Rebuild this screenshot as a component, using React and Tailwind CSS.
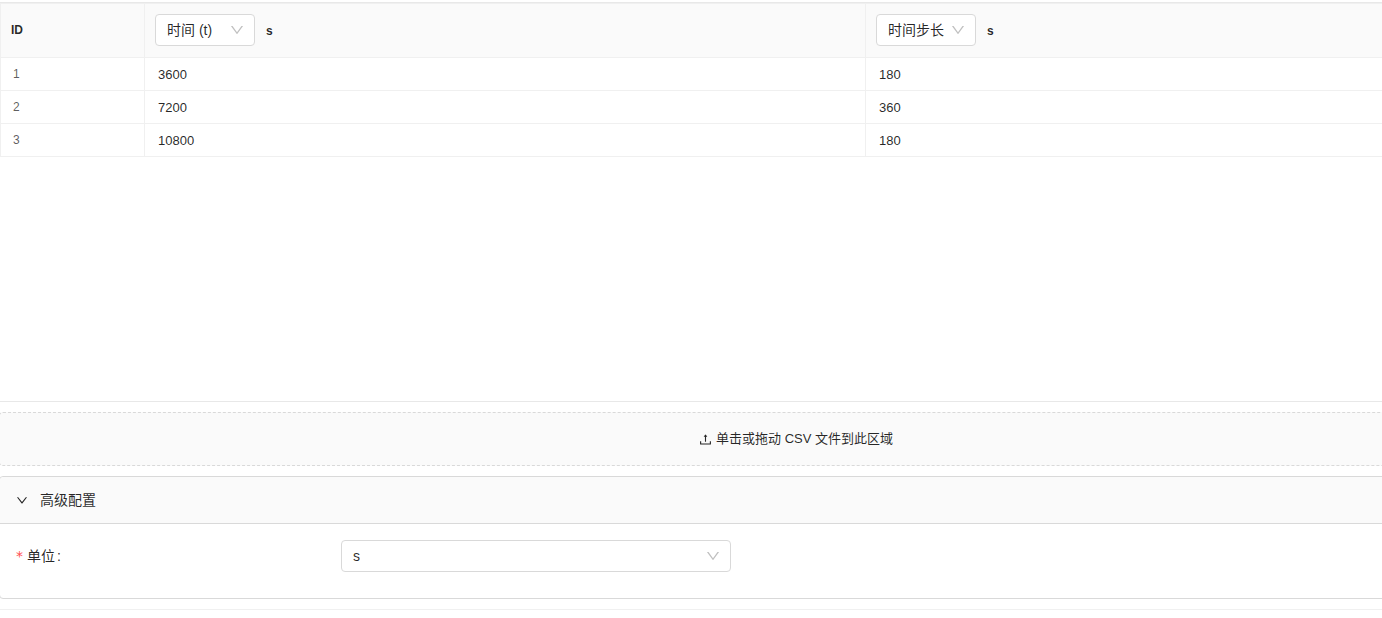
import React, { useState } from "react";

const rows = [
  { id: 1, time: 3600, step: 180 },
  { id: 2, time: 7200, step: 360 },
  { id: 3, time: 10800, step: 180 },
];

function Icon({ d, className }) {
  return (
    <svg viewBox="64 64 896 896" fill="currentColor" aria-hidden="true" className={`shrink-0 ${className}`}>
      <path d={d} />
    </svg>
  );
}

const DOWN =
  "M884 256h-75c-5.1 0-9.9 2.5-12.9 6.6L512 654.2 227.9 262.6c-3-4.1-7.8-6.6-12.9-6.6h-75c-6.5 0-10.3 7.4-6.5 12.7l352.6 486.1c12.8 17.6 39 17.6 51.7 0l352.6-486.1c3.9-5.3.1-12.7-6.4-12.7z";
const RIGHT =
  "M765.7 486.8L314.9 134.7A7.97 7.97 0 00302 141v77.3c0 4.9 2.3 9.6 6.1 12.6l360 281.1-360 281.1c-3.9 3-6.1 7.7-6.1 12.6V883c0 6.7 7.7 10.4 12.9 6.3l450.8-352.1a31.96 31.96 0 000-50.4z";
const UPLOAD =
  "M400 317.7h73.9V656c0 4.4 3.6 8 8 8h60c4.4 0 8-3.6 8-8V317.7H624c6.7 0 10.4-7.7 6.3-12.9L518.3 163a8 8 0 00-12.6 0l-112 141.7c-4.1 5.3-.4 13 6.3 13zM878 626h-60c-4.4 0-8 3.6-8 8v154H214V634c0-4.4-3.6-8-8-8h-60c-4.4 0-8 3.6-8 8v198c0 17.7 14.3 32 32 32h684c17.7 0 32-14.3 32-32V634c0-4.4-3.6-8-8-8z";

function Select({ id, label, options, className }) {
  return (
    <div className={`relative ${className}`}>
      <select
        id={id}
        aria-label={label}
        className="block h-8 w-full appearance-none rounded border border-[#d9d9d9] bg-white pr-6 pl-[11px] text-sm font-normal text-black/85 outline-none focus:border-blue-400"
      >
        {options.map((o) => (
          <option key={o}>{o}</option>
        ))}
      </select>
      <Icon d={DOWN} className="pointer-events-none absolute top-[9px] right-[11px] size-[14px] text-black/25" />
    </div>
  );
}

function HeaderCell({ label, unit }) {
  return (
    <th scope="col" className="border-r border-b border-[#f0f0f0] px-[10px] pb-[2px] font-normal">
      <div className="flex items-center gap-[11px]">
        <Select label="列类型" options={[label]} className="w-[100px]" />
        <span className="pt-[2px] text-xs font-bold">{unit}</span>
      </div>
    </th>
  );
}

export default function App() {
  const [open, setOpen] = useState(true);
  return (
    <div className="overflow-hidden bg-white pt-[2px] font-['Liberation_Sans','Noto_Sans_CJK_SC',sans-serif] text-sm text-black/85">
      <main className="w-[calc(100%+210px)] border-b border-[#f0f0f0] pb-[10px]">
        <section className="min-h-[400px] border-y border-[#e8e8e8]">
          <table className="w-full table-fixed border-separate border-spacing-0 border-t border-l border-[#f0f0f0] text-left">
            <colgroup>
              <col className="w-36" />
              <col className="w-[721px]" />
              <col />
            </colgroup>
            <thead>
              <tr className="h-[54px] bg-[#fafafa]">
                <th scope="col" className="border-r border-b border-[#f0f0f0] px-[10px] pb-[2px] text-xs font-bold">
                  ID
                </th>
                <HeaderCell label="时间 (t)" unit="s" />
                <HeaderCell label="时间步长" unit="s" />
              </tr>
            </thead>
            <tbody>
              {rows.map((r) => (
                <tr key={r.id} className="h-[33px] text-[13px] leading-5">
                  <td className="border-r border-b border-[#f0f0f0] px-3 text-xs text-black/65">{r.id}</td>
                  <td className="border-r border-b border-[#f0f0f0] px-[13px] pt-[2px]">{r.time}</td>
                  <td className="border-r border-b border-[#f0f0f0] px-[13px] pt-[2px]">{r.step}</td>
                </tr>
              ))}
            </tbody>
          </table>
        </section>

        <label className="-mx-px mt-[10px] flex h-[54px] cursor-pointer items-center justify-center gap-1 rounded-sm border border-dashed border-[#d9d9d9] bg-[#fafafa] text-[13px] leading-5">
          <Icon d={UPLOAD} className="size-[13px]" />
          <span>单击或拖动 CSV 文件到此区域</span>
          <input type="file" accept=".csv" className="sr-only" />
        </label>

        <section className="-mx-px mt-[10px] rounded border border-[#d9d9d9]">
          <button
            type="button"
            aria-expanded={open}
            onClick={() => setOpen(!open)}
            className="flex h-[46px] w-full cursor-pointer items-center gap-3 rounded-t bg-[#fafafa] px-4"
          >
            <Icon d={RIGHT} className={open ? "size-3 rotate-90" : "size-3"} />
            <span>高级配置</span>
          </button>
          {open && (
            <div className="grid grid-cols-24 items-center border-t border-[#d9d9d9] px-4 pt-4 pb-[26px]">
              <label htmlFor="unit" className="col-span-5 flex items-center gap-1">
                <span className="font-['DejaVu_Sans',sans-serif] text-[#ff4d4f]">*</span>
                <span>
                  单位<span className="ml-[2px]">:</span>
                </span>
              </label>
              <Select id="unit" options={["s"]} className="col-span-6" />
            </div>
          )}
        </section>
      </main>
    </div>
  );
}
